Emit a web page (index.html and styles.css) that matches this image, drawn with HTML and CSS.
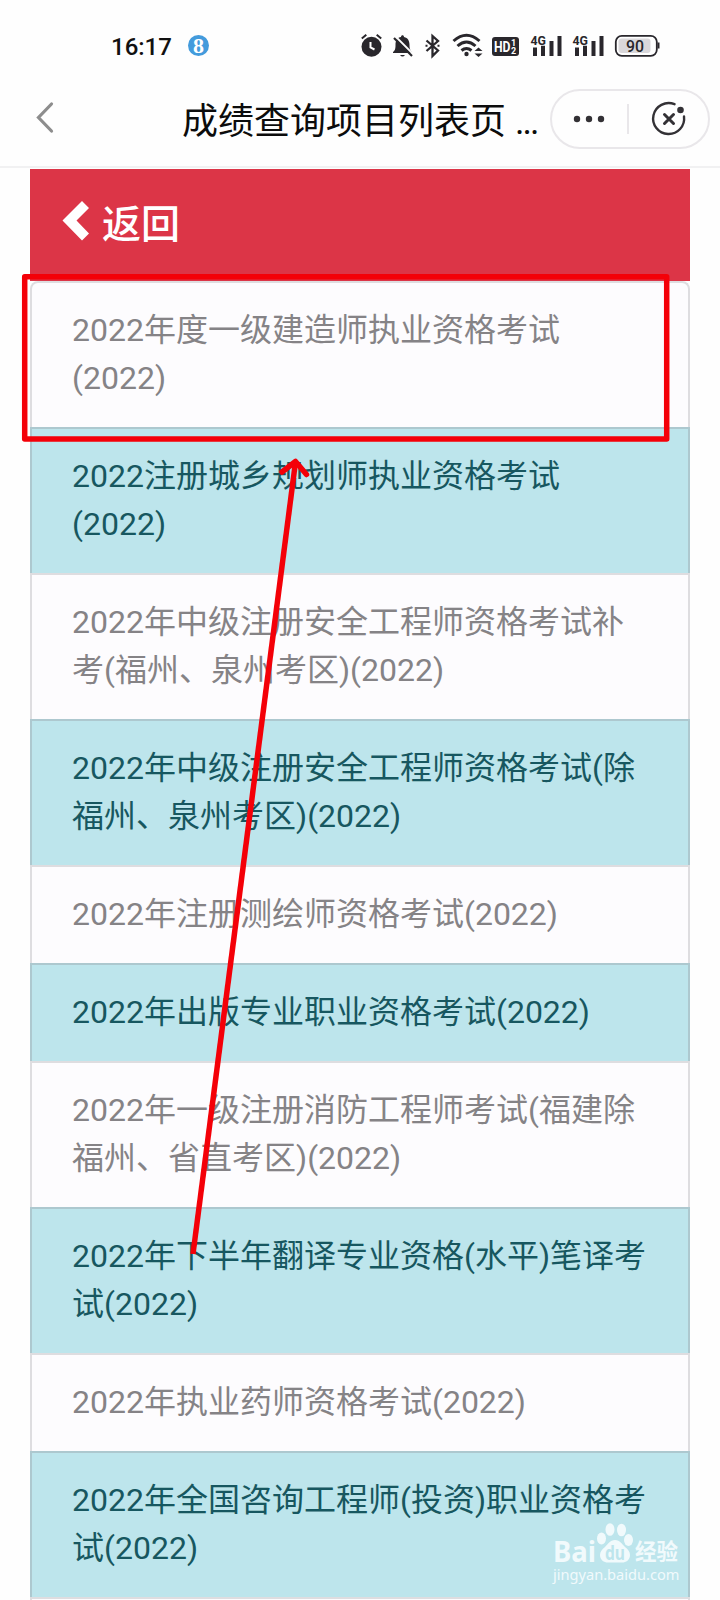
FILE: index.html
```html
<!DOCTYPE html>
<html lang="zh-CN">
<head>
  <meta charset="UTF-8">
  <meta name="viewport" content="width=device-width, initial-scale=1.0">
  <title>成绩查询项目列表页</title>
  <link rel="stylesheet" href="styles.css">
</head>
<body>

  <div class="page">
    <!-- 状态栏 -->
    <div class="status-bar">
      <span class="time">16:17</span>
      <span class="badge">8</span>
      <div class="status-icons">
        <svg width="30" height="50" viewBox="0 0 30 50">
          <circle cx="13.5" cy="26.7" r="10" fill="#29272c"/>
          <path d="M3.8 18.6l4.5-3.8M18.7 14.8l4.5 3.8" stroke="#29272c" stroke-width="2"/>
          <path d="M12.5 22v5.5l4 2" fill="none" stroke="#fff" stroke-width="2"/>
        </svg>
        <svg width="30" height="50" viewBox="0 0 30 50">
          <path d="M5 32c2-1.5 2.5-3 2.5-7 0-5 2-7.5 5.5-8 0-2.5 3-2.5 3 0 4 .8 5.5 4 5.5 8 0 4 .7 5 2.5 7v1H5zM12 35h5q-2.5 3-5 0z" fill="#29272c"/>
          <path d="M7.5 16.5l18 18" stroke="#fefefe" stroke-width="2"/>
          <path d="M6 18l18 18" stroke="#29272c" stroke-width="2.2"/>
        </svg>
        <svg width="30" height="50" viewBox="0 0 30 50">
          <path d="M8.5 20.5l11.500 10-5.500 5.500V16l5.500 5-11.500 10" fill="none" stroke="#29272c" stroke-width="2.3"/>
          <path d="M7.5 25.8h2M19.5 25.8h2" stroke="#29272c" stroke-width="2"/>
        </svg>
        <svg width="40" height="50" viewBox="0 0 40 50">
          <path d="M5.5 21q13-11.5 26 0M9.5 26q9-8 18 0M13.5 30.5q5-4 10 0" fill="none" stroke="#29272c" stroke-width="3"/>
          <circle cx="18.5" cy="34" r="2.2" fill="#29272c"/>
          <path d="M26.5 31l4-3.5 4 3.5zM26.5 33.5l4 3.5 4-3.5z" fill="#29272c"/>
        </svg>
        <svg class="hd" width="36" height="50" viewBox="0 0 36 50">
          <rect x="4" y="17" width="27" height="19" rx="3" fill="#29272c"/>
          <text x="6" y="31.8" font-size="14.5" textLength="16.5" lengthAdjust="spacingAndGlyphs">HD</text>
          <text x="23" y="26" font-size="9">1</text>
          <text x="23" y="34" font-size="9">2</text>
        </svg>
        <svg class="signal" width="42" height="50" viewBox="0 0 42 50">
          <text x="6.5" y="25" font-size="13.5" textLength="15.5" lengthAdjust="spacingAndGlyphs">4G</text>
          <path d="M9 27.5h4V36H9zM17 25.8h4V36h-4zM25.5 21h4v15h-4zM33.5 16h4v20h-4z" fill="#29272c"/>
        </svg>
        <svg class="signal" width="42" height="50" viewBox="0 0 42 50">
          <text x="6.5" y="25" font-size="13.5" textLength="15.5" lengthAdjust="spacingAndGlyphs">4G</text>
          <path d="M9 27.5h4V36H9zM17 25.8h4V36h-4zM25.5 21h4v15h-4zM33.5 16h4v20h-4z" fill="#29272c"/>
        </svg>
        <svg class="battery" width="54" height="50" viewBox="0 0 54 50">
          <rect x="7.8" y="15.8" width="41" height="20" rx="6" fill="#fff" stroke="#29272c" stroke-width="1.8"/>
          <rect x="10.5" y="18.5" width="32" height="14.5" rx="3" fill="#dad8db"/>
          <path d="M50.5 22.5v6" stroke="#29272c" stroke-width="2"/>
          <text x="18" y="31.5" font-size="16" textLength="18" lengthAdjust="spacingAndGlyphs">90</text>
        </svg>
      </div>
    </div>

    <!-- 标题栏 -->
    <div class="nav-bar">
      <svg class="nav-back" width="20" height="34" viewBox="0 0 20 34">
        <path d="M17.5 3L4.5 16.5L17.5 30" fill="none" stroke="#8d8d8d" stroke-width="3.2" stroke-linecap="round"/>
      </svg>
      <div class="nav-title">成绩查询项目列表页 <span class="dots">...</span></div>
      <div class="capsule">
        <svg width="32" height="10" viewBox="0 0 32 10">
          <g fill="#333135">
            <circle cx="4" cy="5" r="3.2"/>
            <circle cx="16" cy="5" r="3.2"/>
            <circle cx="28" cy="5" r="3.2"/>
          </g>
        </svg>
        <span class="divider"></span>
        <svg width="36" height="36" viewBox="0 0 36 36">
          <path d="M23.5 3.2A15.5 15.5 0 1 0 33 15.5" fill="none" stroke="#333135" stroke-width="2.4" stroke-linecap="round"/>
          <circle cx="29.5" cy="9" r="3.3" fill="#333135"/>
          <path d="M13.500 13.500l9 9M22.500 13.500l-9 9" stroke="#333135" stroke-width="3" stroke-linecap="round"/>
        </svg>
      </div>
    </div>

    <div class="container">
      <div class="back-header">
        <svg width="28" height="42" viewBox="0 0 28 42">
          <path d="M20 1L0.500 20.500L20 40.500L27 33.500L14.500 20.500L27 8z" fill="#fff"/>
        </svg>
        <span>返回</span>
      </div>
      <div class="list-group">
        <div class="list-item">2022年度一级建造师执业资格考试(2022)</div>
        <div class="list-item info">2022注册城乡规划师执业资格考试(2022)</div>
        <div class="list-item">2022年中级注册安全工程师资格考试补考(福州、泉州考区)(2022)</div>
        <div class="list-item info">2022年中级注册安全工程师资格考试(除福州、泉州考区)(2022)</div>
        <div class="list-item">2022年注册测绘师资格考试(2022)</div>
        <div class="list-item info">2022年出版专业职业资格考试(2022)</div>
        <div class="list-item">2022年一级注册消防工程师考试(福建除福州、省直考区)(2022)</div>
        <div class="list-item info">2022年下半年翻译专业资格(水平)笔译考试(2022)</div>
        <div class="list-item">2022年执业药师资格考试(2022)</div>
        <div class="list-item info">2022年全国咨询工程师(投资)职业资格考试(2022)</div>
        <div class="list-item"></div>
      </div>
    </div>

    <!-- 红框和箭头 -->
    <svg class="annotation" width="720" height="1600" viewBox="0 0 720 1600">
      <g fill="none" stroke="#f40008" stroke-width="5.5" stroke-linejoin="round">
        <rect x="24.7" y="276.7" width="642" height="162.3"/>
        <path d="M193 1254L295.5 462"/>
        <path d="M282 472L295.5 461.5L306.5 474.5" stroke-linecap="round"/>
      </g>
    </svg>

    <!-- 水印 -->
    <div class="watermark">
      <svg class="logo" width="128" height="43" viewBox="0 0 128 43">
        <g fill="#f1fafc">
          <ellipse cx="48.5" cy="16.5" rx="4.5" ry="6"/>
          <ellipse cx="57" cy="7.5" rx="4.5" ry="6.3"/>
          <ellipse cx="68.5" cy="8" rx="4.5" ry="6.3"/>
          <ellipse cx="75.5" cy="18" rx="4.5" ry="6"/>
          <path d="M62 18c5 0 7 4 10 7 3 2 5 5 5 8 0 5-4 7.500-8 7.500H55c-4 0-8-2.500-8-7.500 0-3 2-6 5-8 3-3 5-7 10-7z"/>
          <text x="0" y="40" font-size="28" textLength="43" lengthAdjust="spacingAndGlyphs">Bai</text>
          <text x="82" y="38" font-size="23" textLength="43" lengthAdjust="spacingAndGlyphs">经验</text>
        </g>
        <text class="du" x="52" y="38" font-size="19" textLength="20" lengthAdjust="spacingAndGlyphs">du</text>
      </svg>
      <div class="url">jingyan.baidu.com</div>
    </div>
  </div>

</body>
</html>
```
FILE: styles.css
```css
* {
  box-sizing: border-box;
}
body {
  margin: 0;
  font-family: Roboto, "Noto Sans CJK SC", sans-serif;
  background-color: #fefefe;
}
svg {
  display: block;
  flex-shrink: 0;
  overflow: visible;
}
.page {
  position: relative;
  width: 720px;
  height: 1600px;
  overflow: hidden;
}
.status-bar {
  display: flex;
  align-items: center;
  height: 70px;
  padding: 20px 58px 0 111px;
}
.time {
  width: 77px;
  font-size: 24px;
  font-weight: 500;
  line-height: 50px;
  padding-top: 3px;
  color: #111;
}
.badge {
  width: 21px;
  height: 21px;
  border-radius: 50%;
  background-color: #439bdc;
  color: #fff;
  font-family: "Liberation Serif", serif;
  font-size: 22px;
  font-weight: bold;
  line-height: 21px;
  text-align: center;
}
.status-icons {
  display: flex;
  margin-left: auto;
}
.status-icons text {
  font-weight: 700;
  fill: #29272c;
}
.status-icons .hd text {
  fill: #fff;
}
.status-icons .battery text {
  font-weight: 500;
}
.nav-bar {
  display: flex;
  align-items: center;
  height: 98px;
  padding: 0 10px 0 34px;
  border-bottom: 2px solid #f1f1f2;
}
.nav-title {
  width: 369px;
  margin-left: 128px;
  padding-top: 7px;
  font-size: 36px;
  line-height: 50px;
  white-space: nowrap;
  color: #0c0c0c;
}
.dots {
  letter-spacing: -2px;
}
.capsule {
  display: flex;
  align-items: center;
  width: 160px;
  height: 60px;
  margin-top: 1px;
  padding-left: 21px;
  border: 2px solid #e9e7ea;
  border-radius: 30px;
}
.divider {
  width: 2px;
  height: 30px;
  margin: 0 22px;
  background-color: #e9e7ea;
}
.container {
  width: 660px;
  margin: 1px auto 0;
}
.back-header {
  display: flex;
  align-items: center;
  gap: 12px;
  height: 112px;
  padding: 0 0 4px 32px;
  background-color: #dc3547;
  color: #fff;
  font-size: 39px;
  font-weight: 500;
}
.back-header span {
  margin-top: -4px;
}
.back-header svg {
  margin-bottom: 5px;
}
.list-item {
  padding: 23px 40px 25px;
  border: 2px solid #dedde0;
  border-bottom: none;
  background-color: #fdfcfe;
  color: #858386;
  font-size: 32px;
  line-height: 48px;
}
.list-item:first-child {
  border-radius: 8px 8px 0 0;
}
.list-item.info {
  border-color: #adc8cf;
  background-color: #bde5ec;
  color: #175760;
}
.annotation {
  position: absolute;
  top: 0;
  left: 0;
}
.watermark {
  position: absolute;
  top: 1522px;
  left: 553px;
  width: 130px;
  color: #f1fafc;
}
.logo text {
  font-family: "Noto Sans", "Noto Sans CJK SC", sans-serif;
  font-weight: 700;
}
.logo .du {
  fill: #bde5ec;
}
.url {
  font-family: "Noto Sans", sans-serif;
  font-size: 14.6px;
  line-height: 19px;
}
```
